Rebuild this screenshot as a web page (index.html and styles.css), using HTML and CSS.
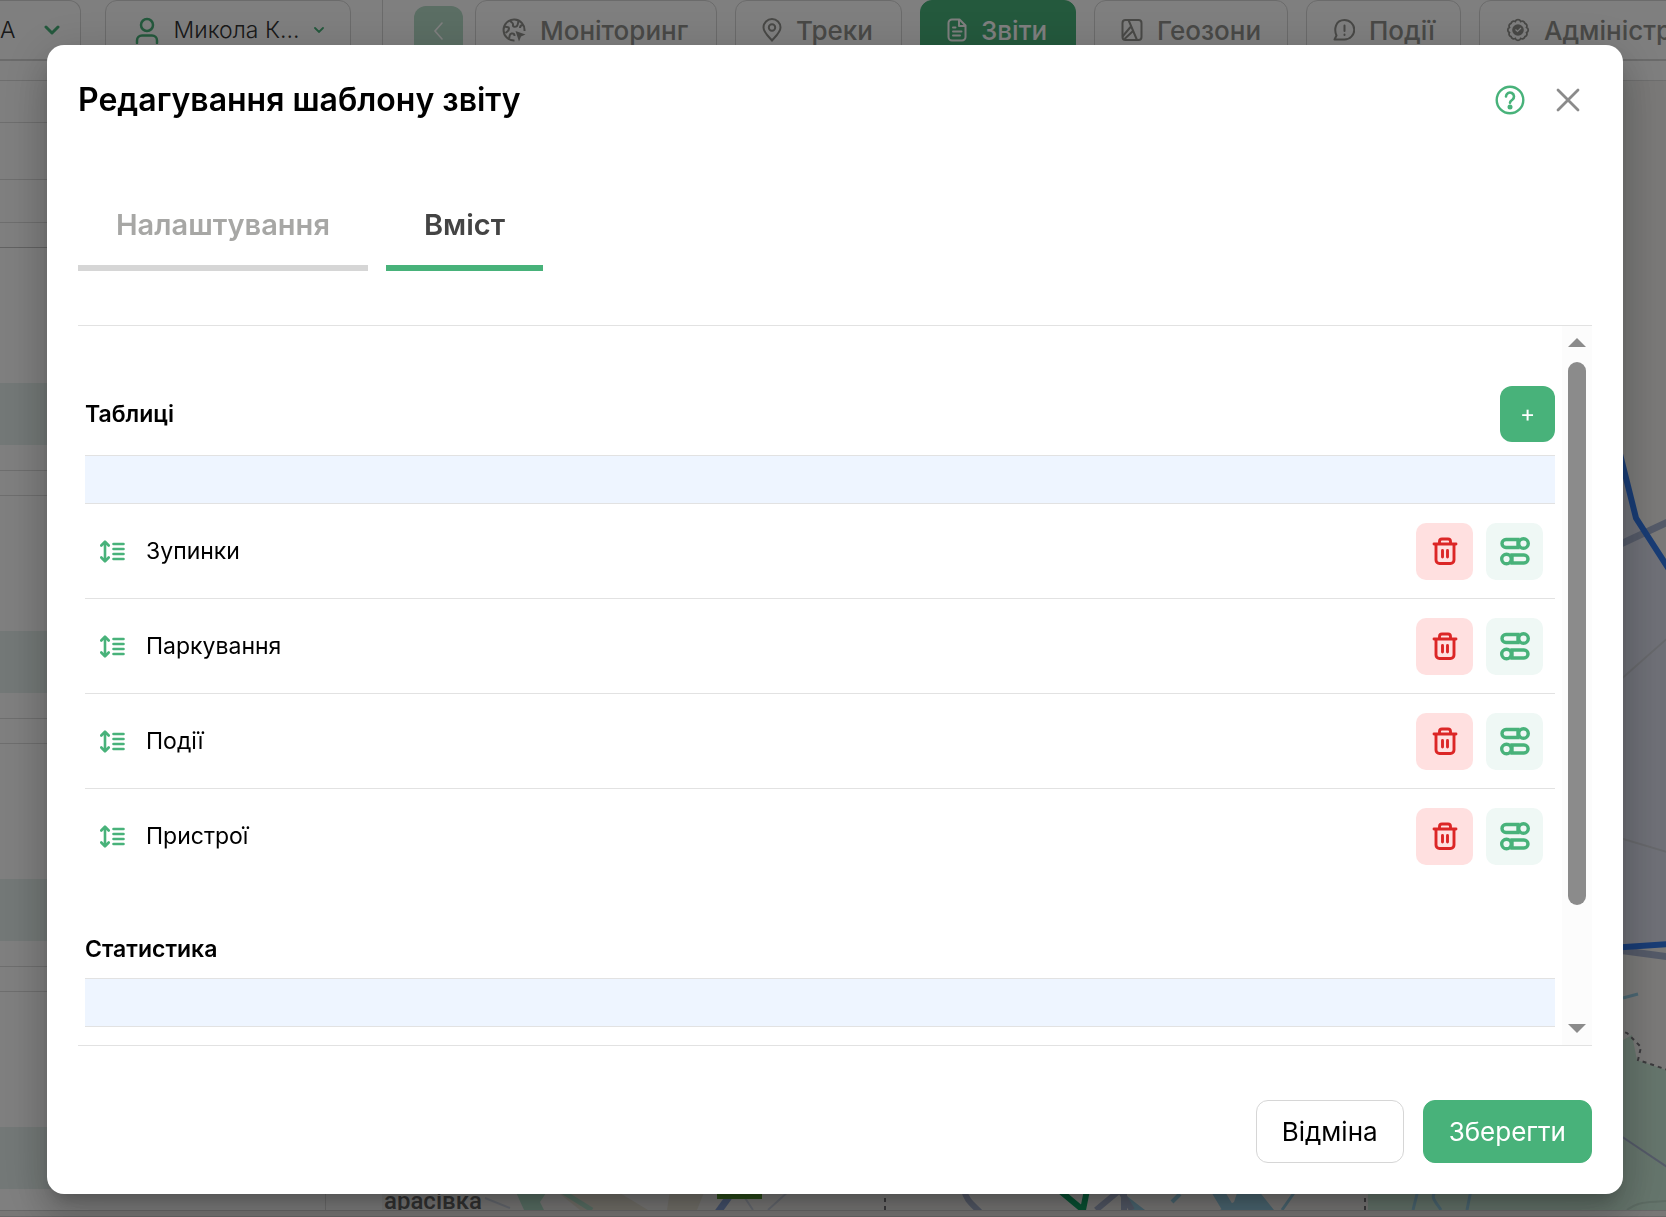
FILE: index.html
```html
<!DOCTYPE html>
<html lang="uk">
<head>
    <meta charset="UTF-8">
    <meta name="viewport" content="width=device-width, initial-scale=1.0">
    <title>Редагування шаблону звіту</title>
    <link rel="stylesheet" href="styles.css">
</head>
<body>

<!-- Shared icons -->
<svg class="sprite" aria-hidden="true">
    <symbol id="icon-drag" viewBox="0 0 25 23">
        <path d="M5 2v19M1.300 5.500 5 1.600l3.700 3.900M1.300 17.500 5 21.400l3.700-3.900M13.500 4h10M13.500 9h10M13.500 14h10M13.500 19h10" fill="none" stroke="currentColor" stroke-width="2.600" stroke-linecap="round" stroke-linejoin="round"/>
    </symbol>
    <symbol id="icon-trash" viewBox="0 0 26 28">
        <path d="M2 7h22M4 7.500v15.500a3.500 3.500 0 0 0 3.500 3.500h11a3.500 3.500 0 0 0 3.500-3.500V7.500M7.500 6.500V4.500a2.500 2.500 0 0 1 2.500-2.500h6a2.500 2.500 0 0 1 2.500 2.500v2M10.500 13.500v6.500M15.500 13.500v6.500" fill="none" stroke="currentColor" stroke-width="2.900" stroke-linecap="round" stroke-linejoin="round"/>
    </symbol>
    <symbol id="icon-settings" viewBox="0 0 30 30">
        <g fill="none" stroke="currentColor" stroke-width="3.400">
            <path d="M18 3.500H6a4 4 0 0 0 0 8h12zM12 19h12a4 4 0 0 1 0 8H12z"/>
            <circle cx="23.500" cy="7.500" r="4.800"/>
            <circle cx="6.500" cy="23" r="4.800"/>
        </g>
    </symbol>
</svg>

<div class="page">
    <header class="topbar">
        <button class="chip chip-first">
            <span>А</span>
            <svg width="16" height="10" viewBox="0 0 16 10"><path d="M2 2l6 6 6-6" fill="none" stroke="#48b27a" stroke-width="3" stroke-linecap="round" stroke-linejoin="round"/></svg>
        </button>
        <button class="chip chip-user">
            <svg width="24" height="27" viewBox="0 0 24 27"><g fill="none" stroke="#48b27a" stroke-width="2.500" stroke-linecap="round"><circle cx="12" cy="8" r="6"/><path d="M2 26v-2.500a5 5 0 0 1 5-5h10a5 5 0 0 1 5 5V26"/></g></svg>
            <span>Микола К...</span>
            <svg width="10" height="6" viewBox="0 0 10 6"><path d="M1 1l4 4 4-4" fill="none" stroke="#48b27a" stroke-width="1.800" stroke-linecap="round"/></svg>
        </button>
        <span class="divider"></span>
        <button class="back" aria-label="Назад">
            <svg width="12" height="18" viewBox="0 0 12 18"><path d="M9 1L2 9l7 8" fill="none" stroke="currentColor" stroke-width="1.600" stroke-linecap="round"/></svg>
        </button>
        <nav class="menu">
            <a href="#">
                <svg width="24" height="24" viewBox="0 0 24 24"><g fill="none" stroke="currentColor" stroke-width="2"><path d="M12.500 22.500A10.500 10.500 0 1 1 22.500 13"/><path d="M2.500 8.500c2.500.8 4.500-.2 4.500 2s-1 3-3.500 4.500M8 2.500c1.500 2.500 3.500 2 3 4.500s3 2 4 1 1-3 1.500-5.500M21 7c-2 0-3 1-3 3M7 20.500c1-2.500 0-4.500 2.500-5s3 1 3 2.500"/></g><path d="M13.500 13l10 3.500-4.500 2-2 5z" fill="currentColor"/></svg>
                Моніторинг
            </a>
            <a href="#">
                <svg width="20" height="24" viewBox="0 0 20 24"><g fill="none" stroke="currentColor" stroke-width="2"><path d="M10 22.500C5.500 17.500 1.500 14 1.500 9.500a8.500 8.500 0 0 1 17 0c0 4.500-4 8-8.500 13z"/><circle cx="10" cy="9.500" r="3.200"/></g></svg>
                Треки
            </a>
            <a href="#" class="active">
                <svg width="20" height="24" viewBox="0 0 20 24"><path d="M12.500 1.500H5A3.500 3.500 0 0 0 1.500 5v14A3.500 3.500 0 0 0 5 22.500h10a3.500 3.500 0 0 0 3.500-3.500V7.500zM12 1.500V8h6M6 9.500h2.500M6 13.500h8.500M6 17.500h7" fill="none" stroke="currentColor" stroke-width="2" stroke-linejoin="round" stroke-linecap="round"/></svg>
                Звіти
            </a>
            <a href="#">
                <svg width="22" height="24" viewBox="0 0 22 24"><g fill="none" stroke="currentColor" stroke-width="2" stroke-linejoin="round"><rect x="1.500" y="2" width="19" height="20" rx="3"/><path d="M7.500 2l8.500 20M9.500 9L1.500 18.500M12 13l-8.500 8"/></g></svg>
                Геозони
            </a>
            <a href="#">
                <svg width="22" height="24" viewBox="0 0 22 24"><path d="M11.500 2a9.500 9.500 0 0 1 0 19.500H1.500l2-4C1 12 2 2 11.500 2zM11.500 7.500v5.500M11.500 16.500v.5" fill="none" stroke="currentColor" stroke-width="2" stroke-linejoin="round" stroke-linecap="round"/></svg>
                Події
            </a>
            <a href="#">
                <svg width="24" height="24" viewBox="0 0 24 24"><g fill="none" stroke="currentColor" stroke-width="1.800"><path d="M9.300 3.500a2.900 2.900 0 0 1 5.400 0 2.900 2.900 0 0 1 4.200 1.800 2.900 2.900 0 0 1 1.700 4.100 2.900 2.900 0 0 1 0 5.200 2.900 2.900 0 0 1-1.700 4.100 2.900 2.900 0 0 1-4.200 1.800 2.900 2.900 0 0 1-5.400 0 2.900 2.900 0 0 1-4.200-1.800 2.900 2.900 0 0 1-1.700-4.100 2.900 2.900 0 0 1 0-5.200 2.900 2.900 0 0 1 1.700-4.100 2.900 2.900 0 0 1 4.200-1.800z"/></g><circle cx="12" cy="12" r="5.800" fill="currentColor"/><path d="M9.500 11.500l2 2 3.500-3.500" fill="none" stroke="#fff" stroke-width="1.200"/></svg>
                Адміністрування
            </a>
        </nav>
    </header>

    <main class="workspace">
        <aside class="sidebar">
            <div class="filter filter-small"></div>
            <div class="filter"></div>
            <div class="filter filter-gap"></div>
            <div class="filter filter-short"></div>
            <div class="item"><div class="item-bar"></div></div>
            <div class="item"><div class="item-bar"></div></div>
            <div class="item"><div class="item-bar"></div></div>
            <div class="item"><div class="item-bar"></div></div>
        </aside>
        <svg class="map" viewBox="382 81 1284 1129" preserveAspectRatio="xMaxYMin slice">
            <!-- Parks and fields -->
            <path d="M1368 1180h255v-140l9-5 5 25 29 10v140h-298z" fill="#cbead8"/>
            <path d="M515 1190h33l-8 12 4 8h-20z" fill="#b4e3cd"/>
            <path d="M555 1190h60l33 20h-68zM670 1190h35l-8 20h-30z" fill="#e9e4d6"/>
            <path d="M560 1190l32 20" stroke="#b4e3cd" stroke-width="5"/>
            <!-- Water -->
            <path d="M1119 1190l26 20h-14zM1210 1190h14l12 20h-14zM1238 1190h20l16 20h-54l14-8z" fill="#98cfe6"/>
            <path d="M1296 1190l-14 20M1418 1190l-5 20M1438 1190c-10 6-2 12 3 20M1471 1190l-4 20M1623 998l15-4" fill="none" stroke="#98cfe6" stroke-width="3"/>
            <path d="M1180 1194l-8 8" stroke="#98cfe6" stroke-width="4"/>
            <!-- Roads -->
            <g fill="none" stroke="#a9b4d0">
                <path d="M1610 949l60 8" stroke-width="7"/>
                <path d="M964 1190c2 10 8 14 16 22M1120 1190l-24 20M1124 1190v20M1120 1190l12 20" stroke-width="6"/>
                <path d="M734 1190l-16 22" stroke="#8aa5dc" stroke-width="7"/>
                <path d="M485 1198l25 10M745 1198l8 12M790 1190l-22 20" stroke="#cfd6e4" stroke-width="2"/>
                <path d="M1600 1122l70 47" stroke-width="2"/>
                <path d="M1627 1210c10-8 20-8 39-9" stroke="#b9d6c6" stroke-width="2"/>
            </g>
            <!-- Geozone -->
            <path d="M1615 440l21 78 30 47v379l-51 3z" fill="#dcdfee" fill-opacity="0.900"/>
            <path d="M1610 689l60-53M1610 835l60 18" fill="none" stroke="#cfd1d8" stroke-width="2"/>
            <path d="M1610 549l60-28" stroke="#a9b4d0" stroke-width="7"/>
            <path d="M1617 442l19 76 36 56M1610 948l60-4" fill="none" stroke="#3279ea" stroke-width="6"/>
            <path d="M1053 1185l30 25 5-25" fill="none" stroke="#0fa869" stroke-width="6"/>
            <!-- Borders -->
            <path d="M1610 1027l17 6 14 14-3 13 30 10M885 1190v20M1365 1190v20" fill="none" stroke="#77757a" stroke-width="2" stroke-dasharray="4 4"/>
            <rect x="717" y="1180" width="45" height="19" fill="#579a32"/>
            <text x="384" y="1209" class="map-label">арасівка</text>
        </svg>
    </main>
    <div class="statusbar"></div>
</div>

<div class="overlay">
    <section class="modal" role="dialog" aria-labelledby="modalTitle">
        <div class="modal-header">
            <h2 id="modalTitle">Редагування шаблону звіту</h2>
            <div class="modal-tools">
                <button class="icon-btn help" aria-label="Довідка">
                    <svg width="30" height="30" viewBox="0 0 30 30"><circle cx="15" cy="15" r="13.300" fill="none" stroke="currentColor" stroke-width="2.400"/><path d="M11 11.500a4 4 0 1 1 6.300 3.300c-1.500 1-2.300 1.400-2.300 3" fill="none" stroke="currentColor" stroke-width="2.600" stroke-linecap="round"/><circle cx="15" cy="22" r="2.500" fill="currentColor"/></svg>
                </button>
                <button class="icon-btn close" aria-label="Закрити">
                    <svg width="24" height="24" viewBox="0 0 24 24"><path d="M2 2l20 20M22 2L2 22" stroke="currentColor" stroke-width="2.800" stroke-linecap="round"/></svg>
                </button>
            </div>
        </div>

        <div class="tabs" role="tablist">
            <button class="tab" role="tab">Налаштування</button>
            <button class="tab selected" role="tab" aria-selected="true">Вміст</button>
        </div>

        <div class="modal-body">
            <div class="content">
                <div class="section-head">
                    <h3>Таблиці</h3>
                    <button class="add" aria-label="Додати">+</button>
                </div>
                <table>
                    <thead>
                        <tr><th colspan="3"></th></tr>
                    </thead>
                    <tbody>
                        <tr>
                            <td class="drag"><svg width="25" height="23"><use href="#icon-drag"/></svg></td>
                            <td>Зупинки</td>
                            <td class="actions">
                                <div class="action-group">
                                    <button class="action delete" aria-label="Видалити"><svg width="26" height="28"><use href="#icon-trash"/></svg></button>
                                    <button class="action edit" aria-label="Налаштувати"><svg width="30" height="30"><use href="#icon-settings"/></svg></button>
                                </div>
                            </td>
                        </tr>
                        <tr>
                            <td class="drag"><svg width="25" height="23"><use href="#icon-drag"/></svg></td>
                            <td>Паркування</td>
                            <td class="actions">
                                <div class="action-group">
                                    <button class="action delete" aria-label="Видалити"><svg width="26" height="28"><use href="#icon-trash"/></svg></button>
                                    <button class="action edit" aria-label="Налаштувати"><svg width="30" height="30"><use href="#icon-settings"/></svg></button>
                                </div>
                            </td>
                        </tr>
                        <tr>
                            <td class="drag"><svg width="25" height="23"><use href="#icon-drag"/></svg></td>
                            <td>Події</td>
                            <td class="actions">
                                <div class="action-group">
                                    <button class="action delete" aria-label="Видалити"><svg width="26" height="28"><use href="#icon-trash"/></svg></button>
                                    <button class="action edit" aria-label="Налаштувати"><svg width="30" height="30"><use href="#icon-settings"/></svg></button>
                                </div>
                            </td>
                        </tr>
                        <tr>
                            <td class="drag"><svg width="25" height="23"><use href="#icon-drag"/></svg></td>
                            <td>Пристрої</td>
                            <td class="actions">
                                <div class="action-group">
                                    <button class="action delete" aria-label="Видалити"><svg width="26" height="28"><use href="#icon-trash"/></svg></button>
                                    <button class="action edit" aria-label="Налаштувати"><svg width="30" height="30"><use href="#icon-settings"/></svg></button>
                                </div>
                            </td>
                        </tr>
                    </tbody>
                </table>

                <div class="section-head">
                    <h3>Статистика</h3>
                </div>
                <table>
                    <thead>
                        <tr><th></th></tr>
                    </thead>
                </table>
            </div>

            <!-- Scrollbar -->
            <div class="scrollbar">
                <svg width="18" height="9" viewBox="0 0 18 9"><path d="M9 0l9 9H0z" fill="#8b8b8b"/></svg>
                <div class="track"><div class="thumb"></div></div>
                <svg width="18" height="9" viewBox="0 0 18 9"><path d="M0 0h18L9 9z" fill="#8b8b8b"/></svg>
            </div>
        </div>

        <div class="modal-footer">
            <button class="btn">Відміна</button>
            <button class="btn btn-primary">Зберегти</button>
        </div>
    </section>
</div>

</body>
</html>
```
FILE: styles.css
```css
* {
    box-sizing: border-box;
}
body {
    font-family: Inter, "Noto Sans", sans-serif;
    margin: 0;
    height: 100vh;
    overflow: hidden;
    background-color: #fff;
    color: #000;
}
button {
    font-family: inherit;
    padding: 0;
    border: none;
    background: none;
    color: inherit;
    cursor: pointer;
}
svg {
    display: block;
    flex: none;
}
.sprite {
    position: absolute;
    width: 0;
    height: 0;
}

/* Page behind the dialog */
.page {
    height: 100vh;
    display: flex;
    flex-direction: column;
}
.topbar {
    height: 61px;
    display: flex;
    border-bottom: 1px solid #d6d6d6;
    overflow: hidden;
    flex: none;
}
.chip {
    display: flex;
    flex: none;
    align-items: center;
    border: 1px solid #d6d6d6;
    border-radius: 12px;
    font-size: 23px;
    font-weight: 300;
    color: #333;
    white-space: nowrap;
}
.chip-first {
    width: 81px;
    justify-content: space-between;
    padding-right: 20px;
    border-left: none;
    border-radius: 0 12px 12px 0;
}
.chip-user {
    width: 246px;
    margin: 0 31px 0 24px;
    padding: 0 26px 0 29px;
    justify-content: space-between;
}
.divider {
    flex: none;
    width: 1px;
    background: #d6d6d6;
}
.back {
    flex: none;
    width: 49px;
    margin: 6px 12px 0 31px;
    padding-bottom: 4px;
    display: flex;
    align-items: center;
    justify-content: center;
    border-radius: 12px 12px 0 0;
    background: #b6dcc8;
    color: #fff;
}
.menu {
    flex: none;
    display: grid;
    grid-template-columns: 242px 167px 156px 194px 155px 300px;
    gap: 18px;
}
.menu a {
    display: flex;
    align-items: center;
    gap: 14px;
    padding-left: 26px;
    border: 1px solid #d6d6d6;
    border-radius: 12px;
    font-size: 26px;
    font-weight: 500;
    color: #92928e;
    text-decoration: none;
    white-space: nowrap;
}
.menu .active {
    background: #48b27a;
    border-color: #48b27a;
    color: #fff;
}
.workspace {
    flex: 1;
    min-height: 0;
    display: grid;
    grid-template-columns: 326px 1fr;
    gap: 56px;
    margin-top: 19px;
    border-top: 1px solid #dcdcdc;
    border-bottom: 1px solid #d0d0d0;
}
.sidebar {
    min-height: 0;
    overflow: hidden;
    border-right: 1px solid #dcdcdc;
}
.filter {
    height: 57px;
    border-bottom: 1px solid #dcdcdc;
}
.filter-small {
    height: 42px;
}
.filter-gap {
    height: 43px;
}
.filter-short {
    height: 25px;
    border-color: #c4c4c4;
}
.item {
    height: 248px;
    padding: 135px 0 25px;
    border-bottom: 1px solid #dcdcdc;
}
.item-bar {
    height: 62px;
    background: #e6f1ee;
}
.item-bar::after {
    content: "";
    display: block;
    height: 87px;
    border-bottom: 1px solid #dcdcdc;
}
.map {
    width: 100%;
    height: 100%;
    min-height: 0;
    background: #f4f3f1;
}
.map-label {
    font-family: Roboto, sans-serif;
    font-size: 24px;
    font-weight: 500;
    fill: #666;
}
.statusbar {
    height: 6px;
    background: #f0eeec;
    border-bottom: 1px solid #d0d0d0;
    flex: none;
}

/* Dialog */
.overlay {
    position: fixed;
    inset: 0;
    padding: 45px 43px 23px 47px;
    display: flex;
    background: rgba(0, 0, 0, 0.5);
}
.modal {
    flex: 1;
    min-width: 0;
    display: flex;
    flex-direction: column;
    padding: 31px;
    border-radius: 17px;
    background: #fff;
    box-shadow: 0 11px 15px -7px rgba(0, 0, 0, 0.2), 0 24px 38px 3px rgba(0, 0, 0, 0.14), 0 9px 46px 8px rgba(0, 0, 0, 0.12);
}
.modal-header {
    display: flex;
    align-items: center;
    justify-content: space-between;
    margin-bottom: 81px;
}
.modal-header h2 {
    margin: 0;
    font-size: 32px;
    font-weight: 600;
    line-height: 48px;
}
.modal-tools {
    display: flex;
    align-items: center;
    gap: 31px;
    padding-right: 12px;
}
.help {
    color: #48b27a;
}
.close {
    color: #8b8b8b;
}
.tabs {
    display: flex;
    gap: 18px;
    margin-bottom: 54px;
}
.tab {
    padding: 0 38px 20px;
    border-bottom: 6px solid #d6d6d6;
    font-size: 29px;
    font-weight: 600;
    line-height: 40px;
    color: #a7a7a5;
}
.tab.selected {
    border-color: #48b27a;
    color: #444;
}
.modal-body {
    flex: 1;
    min-height: 0;
    display: flex;
    border-top: 1px solid #e2e2e2;
    border-bottom: 1px solid #e2e2e2;
}
.content {
    flex: 1;
    min-width: 0;
    overflow: hidden;
    padding: 60px 7px 0;
}
.section-head {
    display: flex;
    align-items: center;
    justify-content: space-between;
    margin-bottom: 13px;
}
.section-head h3 {
    margin: 0;
    font-size: 23px;
    font-weight: 600;
    line-height: 32px;
}
.add {
    width: 55px;
    height: 56px;
    border-radius: 12px;
    background: #48b27a;
    color: #fff;
    font-size: 23px;
}
table {
    width: 100%;
    border-collapse: collapse;
    margin-bottom: 49px;
}
th {
    height: 48px;
    padding: 0;
    background: #eef5ff;
    border-top: 1px solid #e2e2e2;
    border-bottom: 1px solid #e2e2e2;
}
td {
    height: 95px;
    padding: 0;
    border-bottom: 1px solid #e2e2e2;
    font-size: 23px;
}
tr:last-child td {
    border-bottom: none;
}
.drag {
    width: 61px;
    padding-left: 15px;
    color: #48b27a;
}
.actions {
    width: 140px;
    padding-right: 12px;
}
.action-group {
    display: flex;
    justify-content: flex-end;
    gap: 13px;
}
.action {
    width: 57px;
    height: 57px;
    display: flex;
    align-items: center;
    justify-content: center;
    border-radius: 10px;
}
.delete {
    background: #ffe0e0;
    color: #dc2626;
}
.edit {
    background: #eff8f5;
    color: #48b27a;
}
.scrollbar {
    width: 30px;
    padding: 12px 6px;
    display: flex;
    flex-direction: column;
    gap: 15px;
    background: #fcfcfc;
}
.track {
    flex: 1;
}
.thumb {
    height: 84%;
    border-radius: 9px;
    background: #8b8b8b;
}
.modal-footer {
    display: flex;
    justify-content: flex-end;
    gap: 19px;
    margin-top: 54px;
}
.btn {
    height: 63px;
    padding: 0 25px;
    border: 1px solid #d6d6d6;
    border-radius: 12px;
    font-size: 26px;
}
.btn-primary {
    background: #48b27a;
    border-color: #48b27a;
    color: #fff;
}
```
